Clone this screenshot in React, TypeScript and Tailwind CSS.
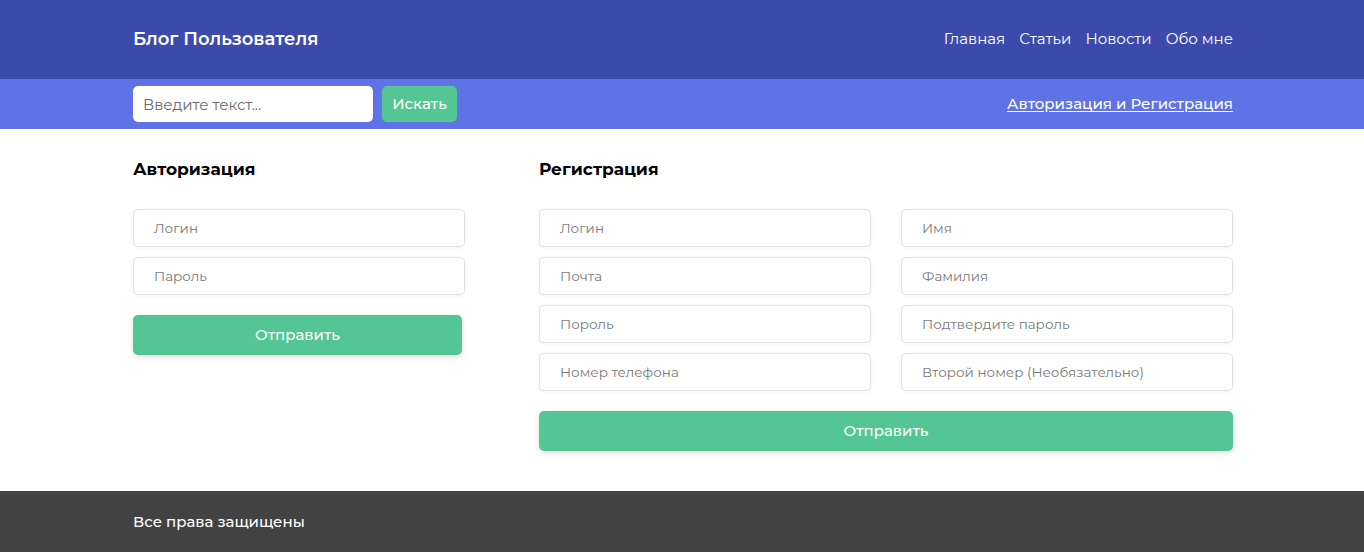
const font = 'font-["Montserrat","Noto_Sans","Open_Sans",sans-serif]';
const wrap = 'mx-auto w-full max-w-[1102px] pl-[2px]';

function Field({ placeholder }: { placeholder: string }) {
  return (
    <input
      placeholder={placeholder}
      className="h-[38px] w-full rounded-[5px] border border-[#e2e2e2] bg-white px-5 text-[13.5px] text-[#333] shadow-[0_1px_4px_rgba(0,0,0,0.06)] outline-none placeholder:text-[#7a7a7a]"
    />
  );
}

function SubmitButton() {
  return (
    <button className="h-[40px] w-full rounded-[5px] bg-[#54c694] pt-[2px] text-[15px] font-medium text-white shadow-[0_2px_6px_rgba(0,0,0,0.12)]">
      Отправить
    </button>
  );
}

export default function App() {
  return (
    <div className={`${font} flex min-h-[552px] flex-col bg-white`}>
      <header className="bg-[#3c4bab]">
        <div className={`${wrap} flex h-[79px] items-center justify-between`}>
          <span className="text-[18px] font-semibold text-white">Блог Пользователя</span>
          <nav className="flex gap-[14px] text-[15px] text-white">
            <a href="#">Главная</a>
            <a href="#">Статьи</a>
            <a href="#">Новости</a>
            <a href="#">Обо мне</a>
          </nav>
        </div>
      </header>

      <div className="bg-[#5f73e6]">
        <div className={`${wrap} flex h-[50px] items-center justify-between`}>
          <div className="flex items-center gap-[9px]">
            <input
              placeholder="Введите текст..."
              className="h-[36px] w-[240px] rounded-[5px] bg-white px-[10px] text-[15px] outline-none placeholder:text-[#6b6b6b]"
            />
            <button className="h-[36px] w-[75px] rounded-[5px] bg-[#54c694] text-[15px] font-medium text-white">
              Искать
            </button>
          </div>
          <a href="#" className="text-[15px] font-medium text-white underline underline-offset-2">
            Авторизация и Регистрация
          </a>
        </div>
      </div>

      <main className={`${wrap} flex flex-1 gap-[74px] pb-[40px] pt-[28px]`}>
        <section className="w-[332px]">
          <h2 className="text-[17px] font-bold text-black">Авторизация</h2>
          <div className="mt-[26px] flex flex-col gap-[10px]">
            <Field placeholder="Логин" />
            <Field placeholder="Пароль" />
          </div>
          <div className="mt-[20px] w-[329px]">
            <SubmitButton />
          </div>
        </section>

        <section className="flex-1">
          <h2 className="text-[17px] font-bold text-black">Регистрация</h2>
          <div className="mt-[26px] grid grid-cols-2 gap-x-[30px] gap-y-[10px]">
            <Field placeholder="Логин" />
            <Field placeholder="Имя" />
            <Field placeholder="Почта" />
            <Field placeholder="Фамилия" />
            <Field placeholder="Пороль" />
            <Field placeholder="Подтвердите пароль" />
            <Field placeholder="Номер телефона" />
            <Field placeholder="Второй номер (Необязательно)" />
          </div>
          <div className="mt-[20px]">
            <SubmitButton />
          </div>
        </section>
      </main>

      <footer className="bg-[#424242]">
        <div className={`${wrap} flex h-[61px] items-center pt-[2px]`}>
          <span className="text-[15px] font-medium text-white">Все права защищены</span>
        </div>
      </footer>
    </div>
  );
}
